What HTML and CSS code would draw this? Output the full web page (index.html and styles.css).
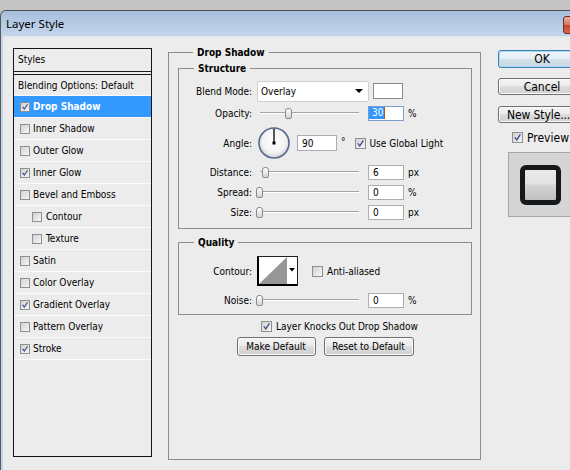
FILE: index.html
```html
<!DOCTYPE html>
<html>
<head>
<meta charset="utf-8">
<title>Layer Style</title>
<link rel="stylesheet" href="styles.css">
</head>
<body>
<div class="window">
  <div class="titlebar">
    <span class="title">Layer Style</span>
    <span class="close"></span>
  </div>
  <div class="content">
    <div class="panel">
      <div class="phead">Styles</div>
      <div class="item plain">Blending Options: Default</div>
      <div class="item sel"><span class="cb"><svg viewBox="0 0 10 10"><path d="M2 4.8 L4.2 7.6 L8.2 1.6" /></svg></span>Drop Shadow</div>
      <div class="item"><span class="cb"></span>Inner Shadow</div>
      <div class="item"><span class="cb"></span>Outer Glow</div>
      <div class="item"><span class="cb"><svg viewBox="0 0 10 10"><path d="M2 4.8 L4.2 7.6 L8.2 1.6" /></svg></span>Inner Glow</div>
      <div class="item"><span class="cb"></span>Bevel and Emboss</div>
      <div class="item sub"><span class="cb"></span>Contour</div>
      <div class="item sub"><span class="cb"></span>Texture</div>
      <div class="item"><span class="cb"></span>Satin</div>
      <div class="item"><span class="cb"></span>Color Overlay</div>
      <div class="item"><span class="cb"><svg viewBox="0 0 10 10"><path d="M2 4.8 L4.2 7.6 L8.2 1.6" /></svg></span>Gradient Overlay</div>
      <div class="item"><span class="cb"></span>Pattern Overlay</div>
      <div class="item"><span class="cb"><svg viewBox="0 0 10 10"><path d="M2 4.8 L4.2 7.6 L8.2 1.6" /></svg></span>Stroke</div>
    </div>

    <div class="group main">
      <div class="gtitle">Drop Shadow</div>

      <div class="group structure">
        <div class="gtitle">Structure</div>
        <div class="row h22 first">
          <span class="lbl">Blend Mode:</span>
          <div class="select"><span>Overlay</span><span class="arrow"></span></div>
          <span class="swatch"></span>
        </div>
        <div class="row h22">
          <span class="lbl">Opacity:</span>
          <div class="slider"><span class="thumb" style="margin-left:29px"></span></div>
          <span class="field focus"><span class="hl">30</span></span>
          <span class="unit">%</span>
        </div>
        <div class="row h38">
          <span class="lbl">Angle:</span>
          <svg class="dial" width="32" height="32" viewBox="0 0 32 32">
            <defs>
              <radialGradient id="dg" cx="50%" cy="45%" r="55%">
                <stop offset="0" stop-color="#ffffff"/>
                <stop offset="0.7" stop-color="#f3f3f3"/>
                <stop offset="1" stop-color="#cfcfcf"/>
              </radialGradient>
            </defs>
            <circle cx="16" cy="16" r="15" fill="url(#dg)" stroke="#566a93" stroke-width="1.6"/>
            <line x1="16" y1="16" x2="16" y2="1.8" stroke="#000" stroke-width="1.3"/>
            <rect x="14.5" y="14.5" width="3" height="3" fill="#000"/>
          </svg>
          <span class="field angle">90</span>
          <span class="deg">°</span>
          <span class="cb lg gl"><svg viewBox="0 0 10 10"><path d="M2 4.8 L4.2 7.6 L8.2 1.6" /></svg></span>
          <span class="cbtext">Use Global Light</span>
        </div>
        <div class="row h20">
          <span class="lbl">Distance:</span>
          <div class="slider"><span class="thumb" style="margin-left:6px"></span></div>
          <span class="field">6</span>
          <span class="unit">px</span>
        </div>
        <div class="row h20">
          <span class="lbl">Spread:</span>
          <div class="slider"><span class="thumb" style="margin-left:0"></span></div>
          <span class="field">0</span>
          <span class="unit">%</span>
        </div>
        <div class="row h20">
          <span class="lbl">Size:</span>
          <div class="slider"><span class="thumb" style="margin-left:0"></span></div>
          <span class="field">0</span>
          <span class="unit">px</span>
        </div>
      </div>

      <div class="group quality">
        <div class="gtitle">Quality</div>
        <div class="row h30 first">
          <span class="lbl">Contour:</span>
          <svg class="contour" width="41" height="30" viewBox="0 0 41 30">
            <rect width="41" height="30" fill="#fff"/>
            <polygon points="2,28 30,1 30,28" fill="#969696"/>
            <path d="M1 0 V30 M0 29 H41" stroke="#000" stroke-width="2" fill="none"/>
            <path d="M0 0.5 H41 M40.5 0 V30" stroke="#222" stroke-width="1" fill="none"/>
            <polygon points="32,12 38,12 35,15.5" fill="#000"/>
          </svg>
          <span class="cb lg aa"></span>
          <span class="cbtext">Anti-aliased</span>
        </div>
        <div class="row h20 noise">
          <span class="lbl">Noise:</span>
          <div class="slider"><span class="thumb" style="margin-left:0"></span></div>
          <span class="field">0</span>
          <span class="unit">%</span>
        </div>
      </div>

      <div class="row knock">
        <span class="cb lg"><svg viewBox="0 0 10 10"><path d="M2 4.8 L4.2 7.6 L8.2 1.6" /></svg></span>
        <span class="cbtext">Layer Knocks Out Drop Shadow</span>
      </div>
      <div class="btnrow">
        <div class="btn w79">Make Default</div>
        <div class="btn w90">Reset to Default</div>
      </div>
    </div>

    <div class="side">
      <div class="sbtn ok">OK</div>
      <div class="sbtn cancel">Cancel</div>
      <div class="sbtn newstyle">New Style...</div>
      <div class="prevrow">
        <span class="cb lg"><svg viewBox="0 0 10 10"><path d="M2 4.8 L4.2 7.6 L8.2 1.6" /></svg></span>
        <span class="cbtext">Preview</span>
      </div>
      <div class="preview">
        <div class="thumbbox"></div>
      </div>
    </div>
  </div>
</div>
</body>
</html>
```

FILE: styles.css
```css
html, body {
  margin: 0;
  height: 100%;
  overflow: hidden;
  background: #c4c4c4;
}
body {
  font-family: "DejaVu Sans Condensed", "DejaVu Sans", sans-serif;
  font-size: 10px;
  color: #000;
}

/* window frame */
.window {
  margin-top: 10px;
  width: 612px;
  height: 460px;
  box-sizing: border-box;
  border-top: 1px solid #4d4d4d;
  border-left: 1px solid #5a5a5a;
  border-top-left-radius: 6px;
  padding-left: 2px;
  background: linear-gradient(#a8bfdc, #c3d5eb 25px, #c3d5eb);
  display: flex;
  flex-direction: column;
}
.titlebar {
  height: 25px;
  flex: none;
  display: flex;
  align-items: flex-start;
}
.title {
  font-family: "Noto Sans", "DejaVu Sans", sans-serif;
  font-size: 11.5px;
  line-height: 25px;
  padding-left: 3px;
  color: #000;
}
.close {
  margin-left: auto;
  margin-right: 4px;
  margin-top: 5px;
  width: 43px;
  height: 16px;
  border: 1px solid #6e2a20;
  border-radius: 3px;
  background: linear-gradient(#eab0a0, #d47866 48%, #c2452e 52%, #d26a50);
}
.content {
  flex: 1;
  background: #ececec;
  border-top: 1px solid #dde5ef;
  display: flex;
  align-items: flex-start;
  padding: 11px 0 0 10px;
}

/* checkbox */
.cb {
  width: 10px;
  height: 10px;
  box-sizing: border-box;
  border: 1px solid #8e8f8f;
  background: linear-gradient(135deg, #d2d2d2, #f6f6f6);
  display: inline-flex;
  flex: none;
}
.cb.lg {
  width: 11px;
  height: 11px;
}
.cb svg {
  width: 100%;
  height: 100%;
}
.cb path {
  fill: none;
  stroke: #3b4f8c;
  stroke-width: 1.5;
}

/* left styles panel */
.panel {
  width: 139px;
  height: 409px;
  box-sizing: border-box;
  border: 1px solid #141414;
  background: #ececec;
  flex: none;
}
.phead {
  height: 22px;
  line-height: 22px;
  padding-left: 4px;
  border-bottom: 4px double #1a1a1a;
}
.item {
  height: 21px;
  border-bottom: 1px solid #fbfbfb;
  display: flex;
  align-items: center;
  padding-left: 6px;
  white-space: nowrap;
}
.item.plain {
  height: 20px;
  padding-left: 4px;
}
.item.sub {
  padding-left: 18px;
}
.item .cb {
  margin-right: 3px;
}
.item.sub .cb {
  margin-right: 4px;
}
.item.sel {
  background: #3399ff;
  color: #fff;
  font-weight: bold;
}

/* group boxes */
.group {
  border: 1px solid #8d8d8d;
  box-sizing: border-box;
}
.gtitle {
  width: max-content;
  height: 13px;
  line-height: 13px;
  margin: -7px 0 0 15px;
  padding: 0 4px;
  background: #ececec;
  font-weight: bold;
}
.main {
  width: 313px;
  height: 408px;
  margin: 4px 0 0 16px;
  padding: 0 8px 0 9px;
  flex: none;
}
.structure {
  margin-top: 9px;
  padding-bottom: 6px;
}
.quality {
  margin-top: 13px;
  padding-bottom: 4px;
}

/* rows */
.row {
  display: flex;
  align-items: center;
  white-space: nowrap;
}
.row.first {
  margin-top: 5px;
}
.quality .row.first {
  margin-top: 7px;
}
.quality .noise {
  margin-top: 4px;
}
.h22 { height: 22px; }
.h20 { height: 20px; }
.h30 { height: 30px; }
.h38 { height: 38px; }
.lbl {
  width: 73px;
  text-align: right;
  flex: none;
}

.select {
  margin-left: 5px;
  width: 112px;
  height: 21px;
  box-sizing: border-box;
  border: 1px solid #d0d0d0;
  border-radius: 2px;
  background: #fff;
  display: flex;
  align-items: center;
  padding-left: 3px;
}
.arrow {
  margin-left: auto;
  margin-right: 5px;
  width: 0;
  height: 0;
  border-left: 4px solid transparent;
  border-right: 4px solid transparent;
  border-top: 4px solid #000;
}
.swatch {
  margin-left: 4px;
  width: 30px;
  height: 16px;
  box-sizing: border-box;
  border: 1px solid #8a8a8a;
  background: #fff;
}

.slider {
  margin-left: 4px;
  width: 103px;
  height: 12px;
  flex: none;
  display: flex;
  align-items: center;
  background:
    linear-gradient(#a4a4a4, #a4a4a4) no-repeat 4px 5px / 99px 1px,
    linear-gradient(#ffffff, #ffffff) no-repeat 4px 6px / 99px 1px;
}
.thumb {
  width: 7px;
  height: 11px;
  box-sizing: border-box;
  border: 1px solid #8a8a8a;
  border-radius: 3px 3px 2px 2px;
  background: linear-gradient(#fdfdfd, #d6d6d6);
  flex: none;
}

.field {
  margin-left: 9px;
  width: 36px;
  height: 15px;
  box-sizing: border-box;
  border: 1px solid #abadb3;
  background: #fff;
  display: flex;
  align-items: center;
  padding-left: 4px;
  flex: none;
}
.field.focus {
  border-color: #7b9ec9;
  padding-left: 0;
}
.hl {
  background: #3399ff;
  color: #fff;
  padding: 0 1px 0 3px;
  line-height: 12px;
  border-right: 1px solid #b35a00;
}
.unit {
  margin-left: 4px;
}

.dial {
  margin-left: 6px;
  flex: none;
}
.field.angle {
  margin-left: 7px;
  width: 40px;
  height: 16px;
}
.deg {
  margin-left: 4px;
  align-self: flex-start;
  margin-top: 12px;
}
.cb.gl {
  margin-left: 9px;
}
.cbtext {
  margin-left: 4px;
}
.contour {
  margin-left: 5px;
  flex: none;
}
.cb.aa {
  margin-left: 14px;
}

.knock {
  margin: 5px 0 0 83px;
  height: 12px;
}
.btnrow {
  margin-top: 5px;
  display: flex;
  justify-content: center;
  gap: 8px;
}
.btn {
  height: 19px;
  box-sizing: border-box;
  border: 1px solid #707070;
  border-radius: 3px;
  background: linear-gradient(#f3f3f3 0%, #ebebeb 50%, #dddddd 50%, #cfcfcf 100%);
  box-shadow: inset 0 0 0 1px #fbfbfb;
  display: flex;
  align-items: center;
  justify-content: center;
}
.w79 { width: 79px; }
.w90 { width: 90px; }

/* right column */
.side {
  margin: 2px 0 0 17px;
  width: 88px;
  flex: none;
  font-size: 12px;
}
.sbtn {
  width: 88px;
  height: 17px;
  box-sizing: border-box;
  border: 1px solid #707070;
  border-radius: 3px;
  background: linear-gradient(#f3f3f3 0%, #ebebeb 50%, #dddddd 50%, #cfcfcf 100%);
  box-shadow: inset 0 0 0 1px #fbfbfb;
  display: flex;
  align-items: center;
  justify-content: center;
  white-space: nowrap;
}
.sbtn.ok {
  height: 18px;
  border-color: #3c7fb1;
  background: linear-gradient(#eef5f9 0%, #e3edf3 50%, #d3e0e8 50%, #c8d7e1 100%);
  box-shadow: inset 0 0 0 1px #a6dcf5;
}
.sbtn.cancel {
  margin-top: 10px;
}
.sbtn.newstyle {
  margin-top: 11px;
  justify-content: flex-start;
  padding-left: 8px;
  letter-spacing: -0.1px;
}
.prevrow {
  margin: 9px 0 0 14px;
  height: 11px;
  display: flex;
  align-items: center;
  white-space: nowrap;
}
.preview {
  margin: 9px 0 0 10px;
  width: 70px;
  height: 65px;
  box-sizing: border-box;
  border: 1px solid #a6a6a6;
  background: #d5d5d5;
  padding: 12px 0 0 11px;
}
.thumbbox {
  width: 41px;
  height: 40px;
  box-sizing: border-box;
  border: 5px solid #16191c;
  border-radius: 6px;
  background: linear-gradient(#e9e9e9 0%, #e3e3e3 45%, #d4d4d4 52%, #bfbfbf 100%);
}
```
